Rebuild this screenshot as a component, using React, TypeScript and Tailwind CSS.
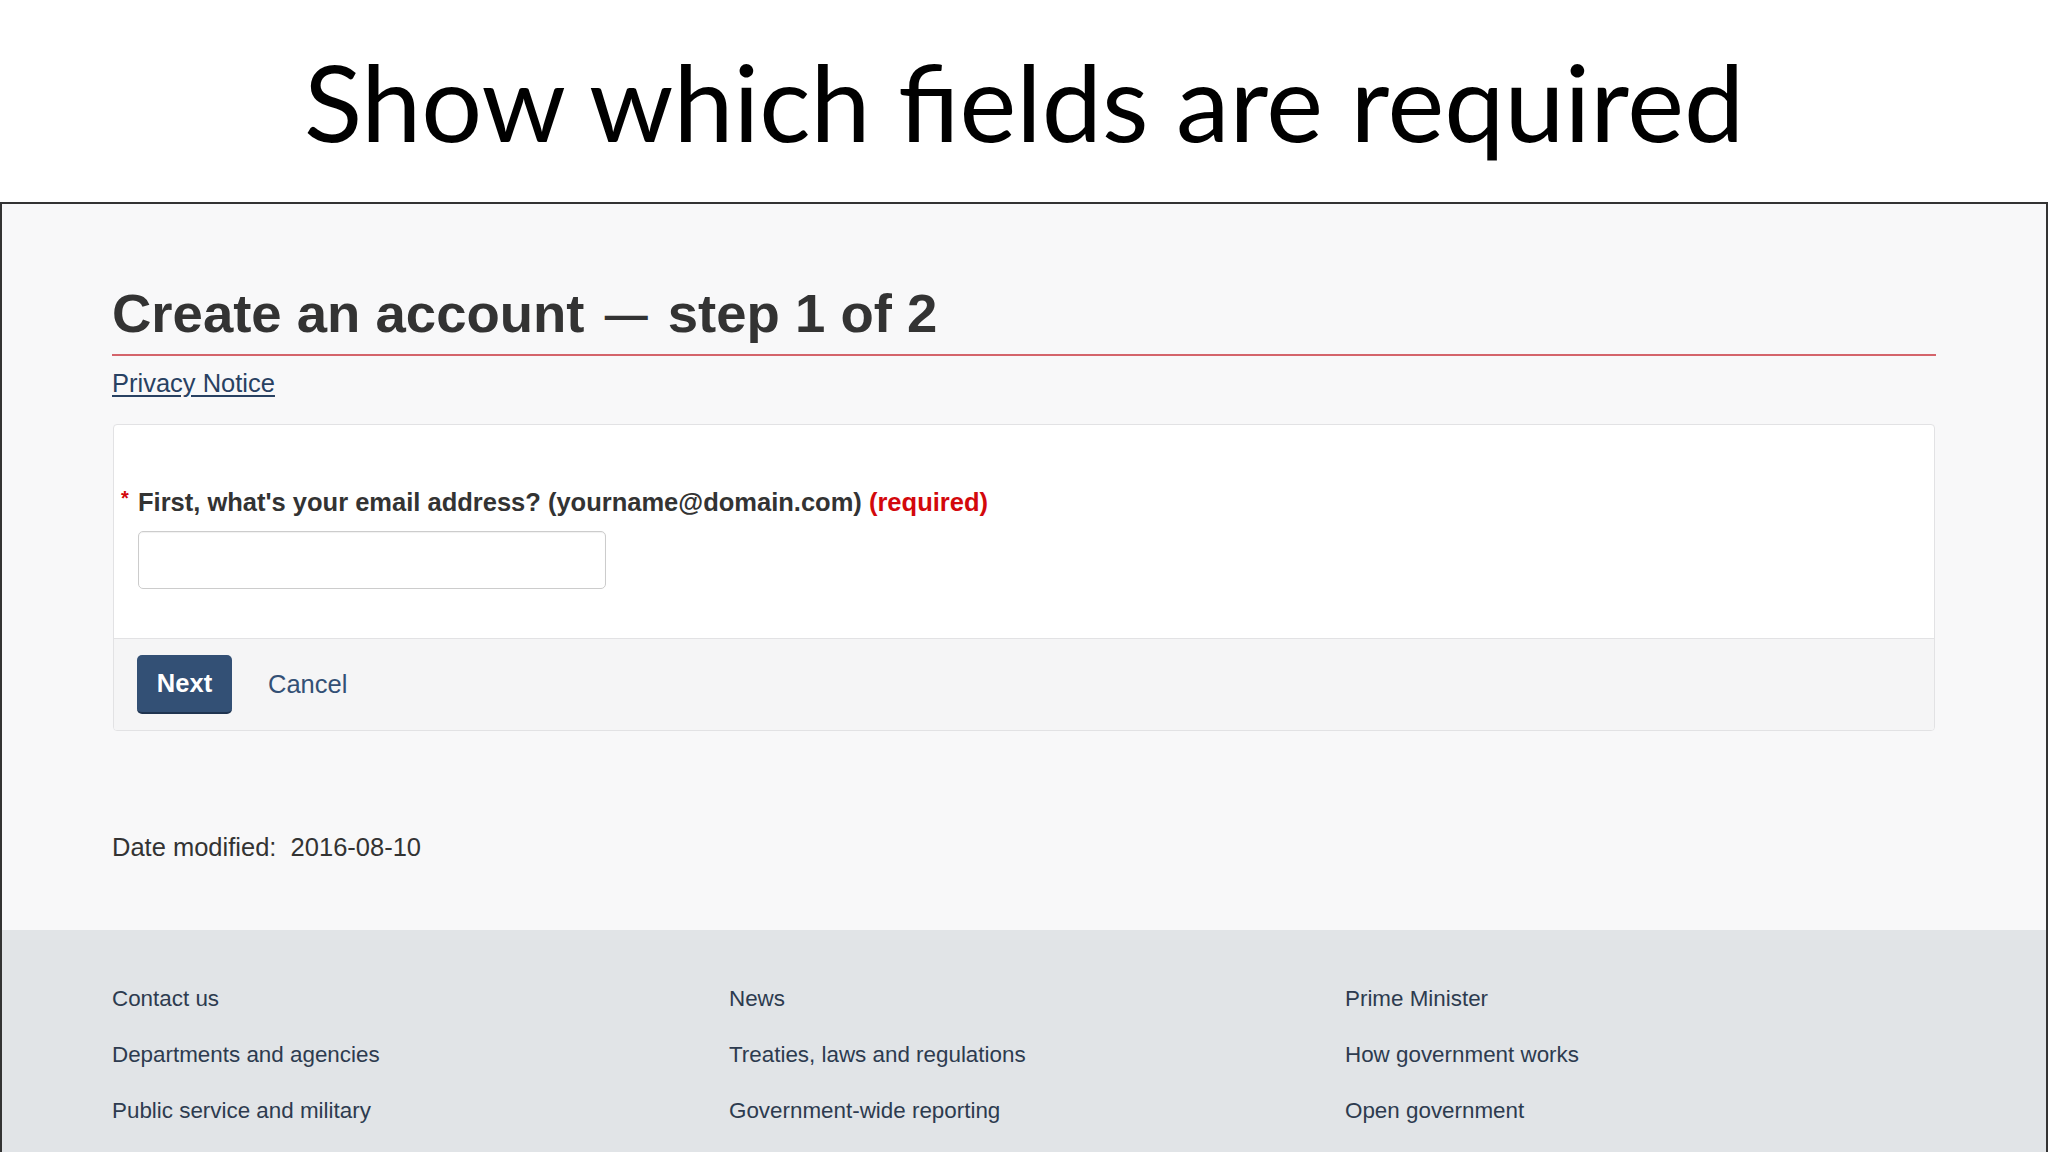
import React from 'react';

const footerLinks = [
  ['Contact us', 'News', 'Prime Minister'],
  ['Departments and agencies', 'Treaties, laws and regulations', 'How government works'],
  ['Public service and military', 'Government-wide reporting', 'Open government'],
];

export default function App() {
  return (
    <div className="w-[2048px] h-[1152px] overflow-hidden bg-white flex flex-col">
      {/* Slide title */}
      <div className="h-[202px] shrink-0 pt-[41px] text-center">
        <h1 className="text-[107.5px] leading-[120px] text-black font-['Lato',sans-serif]">
          Show which fields are required
        </h1>
      </div>

      {/* Screenshot frame */}
      <div className="flex-1 flex flex-col border-2 border-b-0 border-[#333] bg-[#f8f8f9] font-['Liberation_Sans',Arial,sans-serif]">
        <div className="pl-[110px] pr-[110px]">
          <h2 className="mt-[78px] text-[54.5px] leading-[64px] font-bold text-[#333] pb-[8px] border-b-2 border-[#d4646b]">
            Create an account{' '}
            <span className="mx-[5px] text-[43px] leading-none align-[3px]">—</span> step 1 of 2
          </h2>
          <a href="#" className="block mt-[9px] text-[25.5px] leading-[36px] text-[#284162] underline underline-offset-[3px] w-fit">
            Privacy Notice
          </a>

          {/* Form panel */}
          <div className="mt-[23px] ml-px mr-px border border-[#e2e2e4] rounded-[4px] bg-white overflow-hidden">
            <div className="pl-[24px] pt-[59px] pb-[49px]">
              <label className="block text-[25.5px] leading-[36px] font-bold text-[#333] -ml-[17px]">
                <span className="inline-block w-[17px] text-[#d3080c] text-[20px] leading-none align-[6px]">*</span>
                First, what's your email address? (yourname@domain.com){' '}
                <span className="text-[#d3080c]">(required)</span>
              </label>
              <input
                type="text"
                className="block mt-[11px] w-[468px] h-[58px] border border-[#ccc] rounded-[5px] bg-white shadow-[inset_0_1px_1px_rgba(0,0,0,0.06)]"
              />
            </div>
            <div className="flex items-center gap-[36px] pl-[23px] py-[16px] bg-[#f5f5f6] border-t border-[#e2e2e4]">
              <button className="w-[95px] h-[59px] rounded-[5px] bg-[#335075] border-b-2 border-[#1f3450] text-white text-[25.5px] font-bold">
                Next
              </button>
              <a href="#" className="text-[25.5px] text-[#335075]">
                Cancel
              </a>
            </div>
          </div>

          <p className="mt-[98px] text-[25.5px] leading-[36px] text-[#333]">
            Date modified:&nbsp; 2016-08-10
          </p>
        </div>

        {/* Site footer */}
        <div className="mt-auto h-[222px] bg-[#e1e4e7] pl-[110px] pt-[41px]">
          <div className="grid grid-cols-[617px_616px_1fr]">
            {footerLinks.map((row) =>
              row.map((link) => (
                <a key={link} href="#" className="text-[22.4px] leading-[56px] text-[#2d3b4f]">
                  {link}
                </a>
              ))
            )}
          </div>
        </div>
      </div>
    </div>
  );
}
